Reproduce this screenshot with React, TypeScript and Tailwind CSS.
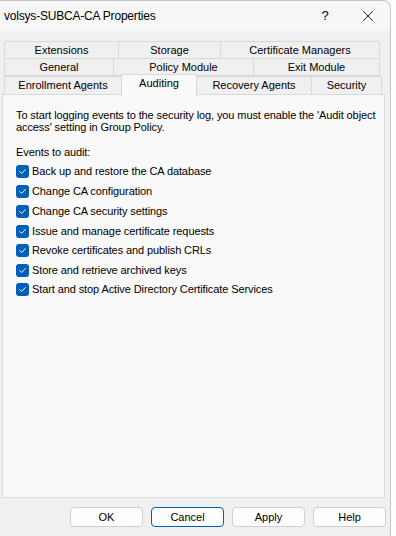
import React from "react";

const ui = { fontFamily: '"Segoe UI", "Liberation Sans", Arial, sans-serif' };
const tabFont = { fontFamily: '"Liberation Sans", Arial, sans-serif' };

const rows = [
  [
    { label: "Extensions", w: 115 },
    { label: "Storage", w: 103 },
    { label: "Certificate Managers", w: 160 },
  ],
  [
    { label: "General", w: 110 },
    { label: "Policy Module", w: 141 },
    { label: "Exit Module", w: 127 },
  ],
];

const events = [
  "Back up and restore the CA database",
  "Change CA configuration",
  "Change CA security settings",
  "Issue and manage certificate requests",
  "Revoke certificates and publish CRLs",
  "Store and retrieve archived keys",
  "Start and stop Active Directory Certificate Services",
];
const gaps = [0, 7, 7, 7, 6, 7, 6];

function Tab({ label, w }: { label: string; w: number }) {
  return (
    <div
      className="h-[18px] -ml-px first:ml-0 flex items-center justify-center border border-[#d9d9d9] bg-[#f0f0f0] text-[11px] text-black"
      style={{ width: w }}
    >
      {label}
    </div>
  );
}

function Check() {
  return (
    <div className="w-[13px] h-[13px] rounded-[3px] bg-[#005fb8] flex items-center justify-center shrink-0">
      <svg width="9" height="9" viewBox="0 0 9 9" fill="none">
        <path d="M1.8 4.6 L3.7 6.5 L7.3 2.6" stroke="white" strokeWidth="1" strokeLinecap="round" strokeLinejoin="round" />
      </svg>
    </div>
  );
}

function Button({ label, focus }: { label: string; focus?: boolean }) {
  return (
    <button
      className={
        "w-[73px] h-[20px] rounded-[4px] bg-[#fdfdfd] text-[11px] text-black flex items-center justify-center border " +
        (focus ? "border-[#005fb8]" : "border-[#d0d0d0]")
      }
      style={ui}
    >
      {label}
    </button>
  );
}

export default function App() {
  return (
    <div className="w-[396px] h-[536px] bg-white overflow-hidden">
      <div className="w-[391px] h-[536px] bg-[#f0f0f0] rounded-tr-[8px] border-r border-t border-[#c4c4c4] flex flex-col">
        <div className="h-[30px] bg-[#f7f7f7] rounded-tr-[8px] flex items-center pl-[4px] text-[12px] text-black" style={ui}>
          <span className="flex-1 tracking-[-0.2px]">volsys-SUBCA-CA Properties</span>
          <span className="w-[14px] text-[13px] mr-[30px] text-center">?</span>
          <svg width="12" height="12" viewBox="0 0 12 12" className="mr-[16px]">
            <path d="M1 1 L11 11 M11 1 L1 11" stroke="#222" strokeWidth="1" />
          </svg>
        </div>

        <div className="mt-[10px] pl-[4px] flex flex-col" style={tabFont}>
          {rows.map((r, i) => (
            <div key={i} className="flex -mt-px first:mt-0">
              {r.map((t) => (
                <Tab key={t.label} {...t} />
              ))}
            </div>
          ))}
          <div className="flex items-end h-[21px] -mt-[2px] relative z-10 text-[11px]">
            <div className="w-[118px] h-[19px] flex items-center justify-center border border-[#d9d9d9] bg-[#f0f0f0]">Enrollment Agents</div>
            <div className="w-[76px] h-[22px] -ml-px -mb-px pb-[4px] flex items-center justify-center border border-b-0 border-[#d9d9d9] bg-[#f9f9f9]">Auditing</div>
            <div className="w-[116px] h-[19px] -ml-px flex items-center justify-center border border-[#d9d9d9] bg-[#f0f0f0]">Recovery Agents</div>
            <div className="w-[71px] h-[19px] -ml-px flex items-center justify-center border border-[#d9d9d9] bg-[#f0f0f0]">Security</div>
          </div>
        </div>

        <div className="ml-[2px] w-[383px] h-[404px] -mt-px border border-[#d9d9d9] bg-[#f9f9f9] pl-[13px] pr-[6px] pt-[14px] text-[11px] tracking-[-0.1px] text-black" style={ui}>
          <p className="leading-[12px]">
            To start logging events to the security log, you must enable the 'Audit object access' setting in Group Policy.
          </p>
          <p className="mt-[12px] leading-[14px]">Events to audit:</p>
          <div className="mt-[6px] flex flex-col">
            {events.map((e, i) => (
              <div key={e} className="flex items-center gap-[3px] h-[13px]" style={{ marginTop: gaps[i] }}>
                <Check />
                <span className="leading-[13px]">{e}</span>
              </div>
            ))}
          </div>
        </div>

        <div className="mt-[9px] pl-[70px] flex gap-[8px]">
          <Button label="OK" />
          <Button label="Cancel" focus />
          <Button label="Apply" />
          <Button label="Help" />
        </div>
      </div>
    </div>
  );
}
